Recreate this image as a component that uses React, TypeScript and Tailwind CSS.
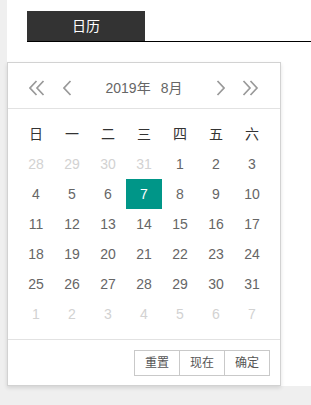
const weekdays = ['日', '一', '二', '三', '四', '五', '六'];

// 6 rows x 7 days for August 2019, with padding days from July / September
const days: { n: number; muted: boolean }[] = [
  ...[28, 29, 30, 31].map((n) => ({ n, muted: true })),
  ...Array.from({ length: 31 }, (_, i) => ({ n: i + 1, muted: false })),
  ...[1, 2, 3, 4, 5, 6, 7].map((n) => ({ n, muted: true })),
];

const selected = 7;

function Chevron({ dir, double }: { dir: 'left' | 'right'; double?: boolean }) {
  const w = double ? 17 : 9;
  const pts = (x: number) =>
    dir === 'left' ? `${x + 7.5},1 ${x + 1},8 ${x + 7.5},15` : `${x + 1.5},1 ${x + 8},8 ${x + 1.5},15`;
  return (
    <svg width={w} height="16" viewBox={`0 0 ${w} 16`} fill="none" stroke="#999999" strokeWidth="1.7">
      <polyline points={pts(0)} />
      {double && <polyline points={pts(7)} />}
    </svg>
  );
}

export default function App() {
  return (
    <div
      className="min-h-[405px] bg-[#efefef] pl-[7px]"
      style={{ fontFamily: '"Liberation Sans", "Noto Sans CJK SC", sans-serif' }}
    >
      <div className="h-[386px] bg-white pt-[11px]">
        {/* tab bar */}
        <div className="ml-[20px] flex border-b border-black">
          <div className="flex h-[30px] w-[118px] items-center justify-center bg-[#333333] text-[14px] text-white">
            日历
          </div>
        </div>

        {/* laydate panel */}
        <div className="mt-[20px] w-[274px] border border-[#d2d2d2] bg-white shadow-[0_2px_4px_rgba(0,0,0,0.12)]">
          <div className="relative flex h-[46px] items-center justify-center border-b border-[#e2e2e2] pt-[5px] text-[14px] text-[#666666]">
            <span className="absolute left-[21px] top-[17px]">
              <Chevron dir="left" double />
            </span>
            <span className="absolute left-[55px] top-[17px]">
              <Chevron dir="left" />
            </span>
            <span className="px-[5px]">2019年</span>
            <span className="px-[5px]">8月</span>
            <span className="absolute right-[55px] top-[17px]">
              <Chevron dir="right" />
            </span>
            <span className="absolute right-[21px] top-[17px]">
              <Chevron dir="right" double />
            </span>
          </div>

          <div className="p-[10px]">
            <div className="grid grid-cols-[repeat(7,36px)] text-[14px]">
              {weekdays.map((w) => (
                <div key={w} className="flex h-[30px] items-center justify-center text-[#333333]">
                  {w}
                </div>
              ))}
              {days.map((d, i) => {
                const active = !d.muted && d.n === selected;
                return (
                  <div
                    key={i}
                    className={`flex h-[30px] items-center justify-center ${
                      active ? 'bg-[#009688] text-white' : d.muted ? 'text-[#d2d2d2]' : 'text-[#666666]'
                    }`}
                  >
                    {d.n}
                  </div>
                );
              })}
            </div>
          </div>

          <div className="flex h-[46px] justify-end border-t border-[#e2e2e2] p-[10px]">
            {['重置', '现在', '确定'].map((t, i) => (
              <span
                key={t}
                className={`flex h-[26px] items-center border border-[#c9c9c9] px-[10px] text-[12px] text-[#555555] ${
                  i > 0 ? '-ml-px' : ''
                }`}
              >
                {t}
              </span>
            ))}
          </div>
        </div>
      </div>
    </div>
  );
}
